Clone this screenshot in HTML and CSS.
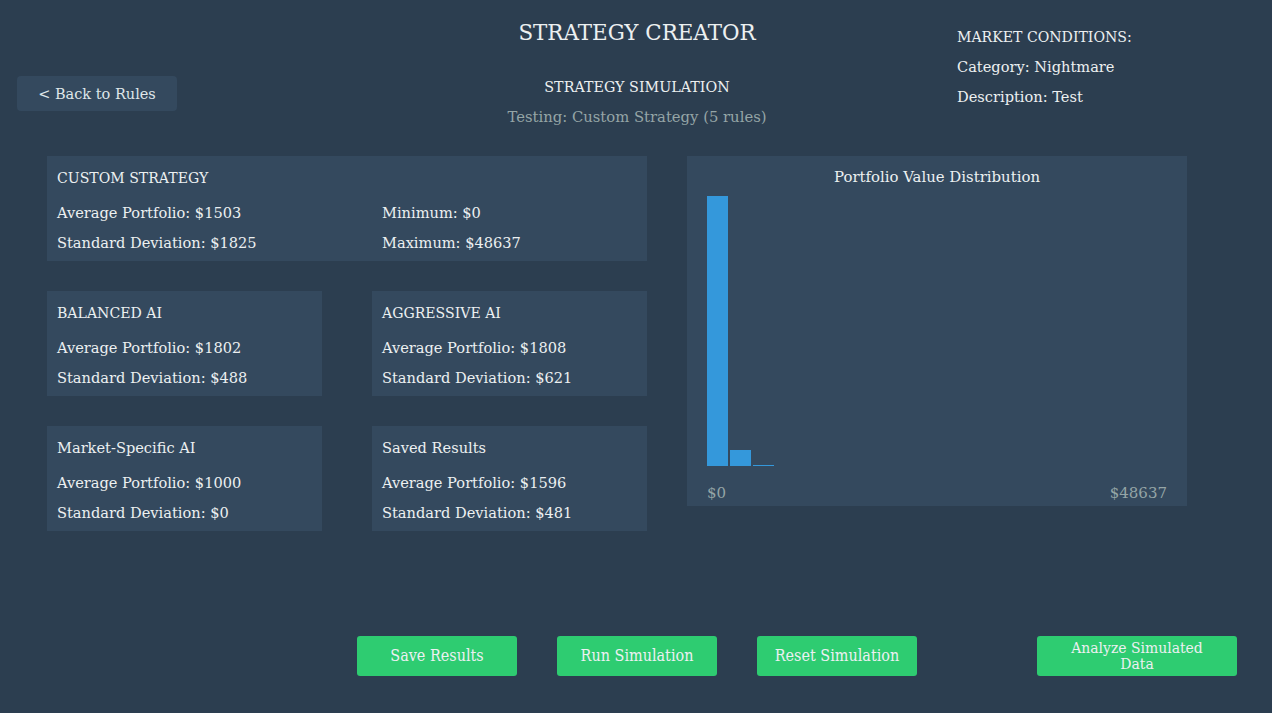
FILE: index.html
```html
<!DOCTYPE html>
<html lang="en">
<head>
    <meta charset="UTF-8">
    <title>Strategy Creator</title>
    <link rel="stylesheet" href="styles.css">
</head>
<body>
    <header class="top">
        <div class="top-left">
            <button class="back-btn">&lt; Back to Rules</button>
        </div>
        <div class="top-center">
            <h1>STRATEGY CREATOR</h1>
            <p class="subtitle">STRATEGY SIMULATION</p>
            <p class="testing">Testing: Custom Strategy (5 rules)</p>
        </div>
        <div class="market">
            <p class="caps">MARKET CONDITIONS:</p>
            <p>Category: Nightmare</p>
            <p>Description: Test</p>
        </div>
    </header>

    <main class="results">
        <div class="cards">
            <section class="card card-wide">
                <h2 class="caps">CUSTOM STRATEGY</h2>
                <div class="two-col">
                    <p>Average Portfolio: $1503</p>
                    <p>Minimum: $0</p>
                    <p>Standard Deviation: $1825</p>
                    <p>Maximum: $48637</p>
                </div>
            </section>
            <section class="card">
                <h2 class="caps">BALANCED AI</h2>
                <p>Average Portfolio: $1802</p>
                <p>Standard Deviation: $488</p>
            </section>
            <section class="card">
                <h2 class="caps">AGGRESSIVE AI</h2>
                <p>Average Portfolio: $1808</p>
                <p>Standard Deviation: $621</p>
            </section>
            <section class="card">
                <h2>Market-Specific AI</h2>
                <p>Average Portfolio: $1000</p>
                <p>Standard Deviation: $0</p>
            </section>
            <section class="card">
                <h2>Saved Results</h2>
                <p>Average Portfolio: $1596</p>
                <p>Standard Deviation: $481</p>
            </section>
        </div>

        <section class="chart">
            <h3>Portfolio Value Distribution</h3>
            <div class="plot">
                <div class="bar" style="height: 270px"></div>
                <div class="bar" style="height: 16px"></div>
                <div class="bar" style="height: 1px"></div>
            </div>
            <div class="axis">
                <span>$0</span>
                <span>$48637</span>
            </div>
        </section>
    </main>

    <footer class="actions">
        <button class="green-btn">Save Results</button>
        <button class="green-btn">Run Simulation</button>
        <button class="green-btn">Reset Simulation</button>
        <button class="green-btn analyze-btn">Analyze Simulated<br>Data</button>
    </footer>
</body>
</html>
```

FILE: styles.css
```css
* {
    margin: 0;
    padding: 0;
    box-sizing: border-box;
}

body {
    font-family: "DejaVu Serif", serif;
    font-size: 14.6px;
    background: #2c3e50;
    color: #ecf0f1;
    width: 1272px;
    height: 713px;
    overflow: hidden;
}

.caps {
    font-size: 14.1px;
}

/* header */
.top {
    display: grid;
    grid-template-columns: 300px 600px 1fr;
    column-gap: 20px;
    padding: 18px 0 0 17px;
}

.back-btn {
    margin-top: 58px;
    width: 160px;
    height: 35px;
    background: #34495e;
    color: #dfe6e9;
    border: none;
    border-radius: 4px;
    font-family: inherit;
    font-size: 14.5px;
}

.top-center {
    text-align: center;
}

h1 {
    font-size: 21.4px;
    font-weight: normal;
    line-height: 30px;
}

.subtitle {
    margin-top: 24px;
    line-height: 30px;
    font-size: 14.3px;
}

.testing {
    color: #95a5a6;
    line-height: 30px;
    font-size: 14.8px;
}

.market {
    margin-top: 4px;
}

.market p {
    line-height: 30px;
}

/* cards */
.results {
    display: grid;
    grid-template-columns: 600px 500px;
    column-gap: 40px;
    align-items: start;
    margin: 24px 0 0 47px;
}

.cards {
    display: grid;
    grid-template-columns: 275px 275px;
    column-gap: 50px;
    row-gap: 30px;
}

.card {
    background: #34495e;
    padding: 7px 10px 3px;
    height: 105px;
}

.card-wide {
    grid-column: 1 / 3;
}

.card h2 {
    font-weight: normal;
    line-height: 30px;
    margin-bottom: 5px;
}

.card h2:not(.caps) {
    font-size: 14.6px;
}

.card p {
    line-height: 30px;
}

.two-col {
    display: grid;
    grid-template-columns: 325px 1fr;
}

/* chart */
.chart {
    background: #34495e;
    height: 350px;
    padding: 6px 20px 0;
}

.chart h3 {
    font-size: 14.9px;
    font-weight: normal;
    line-height: 30px;
    text-align: center;
}

.plot {
    margin-top: 4px;
    height: 270px;
    display: flex;
    align-items: flex-end;
    gap: 2px;
}

.bar {
    width: 21px;
    background: #3498db;
}

.axis {
    display: flex;
    justify-content: space-between;
    color: #95a5a6;
    font-size: 15px;
    line-height: 30px;
    margin-top: 12px;
}

/* buttons */
.actions {
    display: flex;
    gap: 40px;
    margin: 105px 0 0 357px;
}

.green-btn {
    width: 160px;
    height: 40px;
    background: #2ecc71;
    color: #ecf0f1;
    border: none;
    border-radius: 3px;
    font-family: "DejaVu Serif Condensed", "DejaVu Serif", serif;
    font-stretch: condensed;
    font-size: 16px;
    line-height: 16px;
}

.analyze-btn {
    width: 200px;
    margin-left: 80px;
    font-size: 15.5px;
}
```
